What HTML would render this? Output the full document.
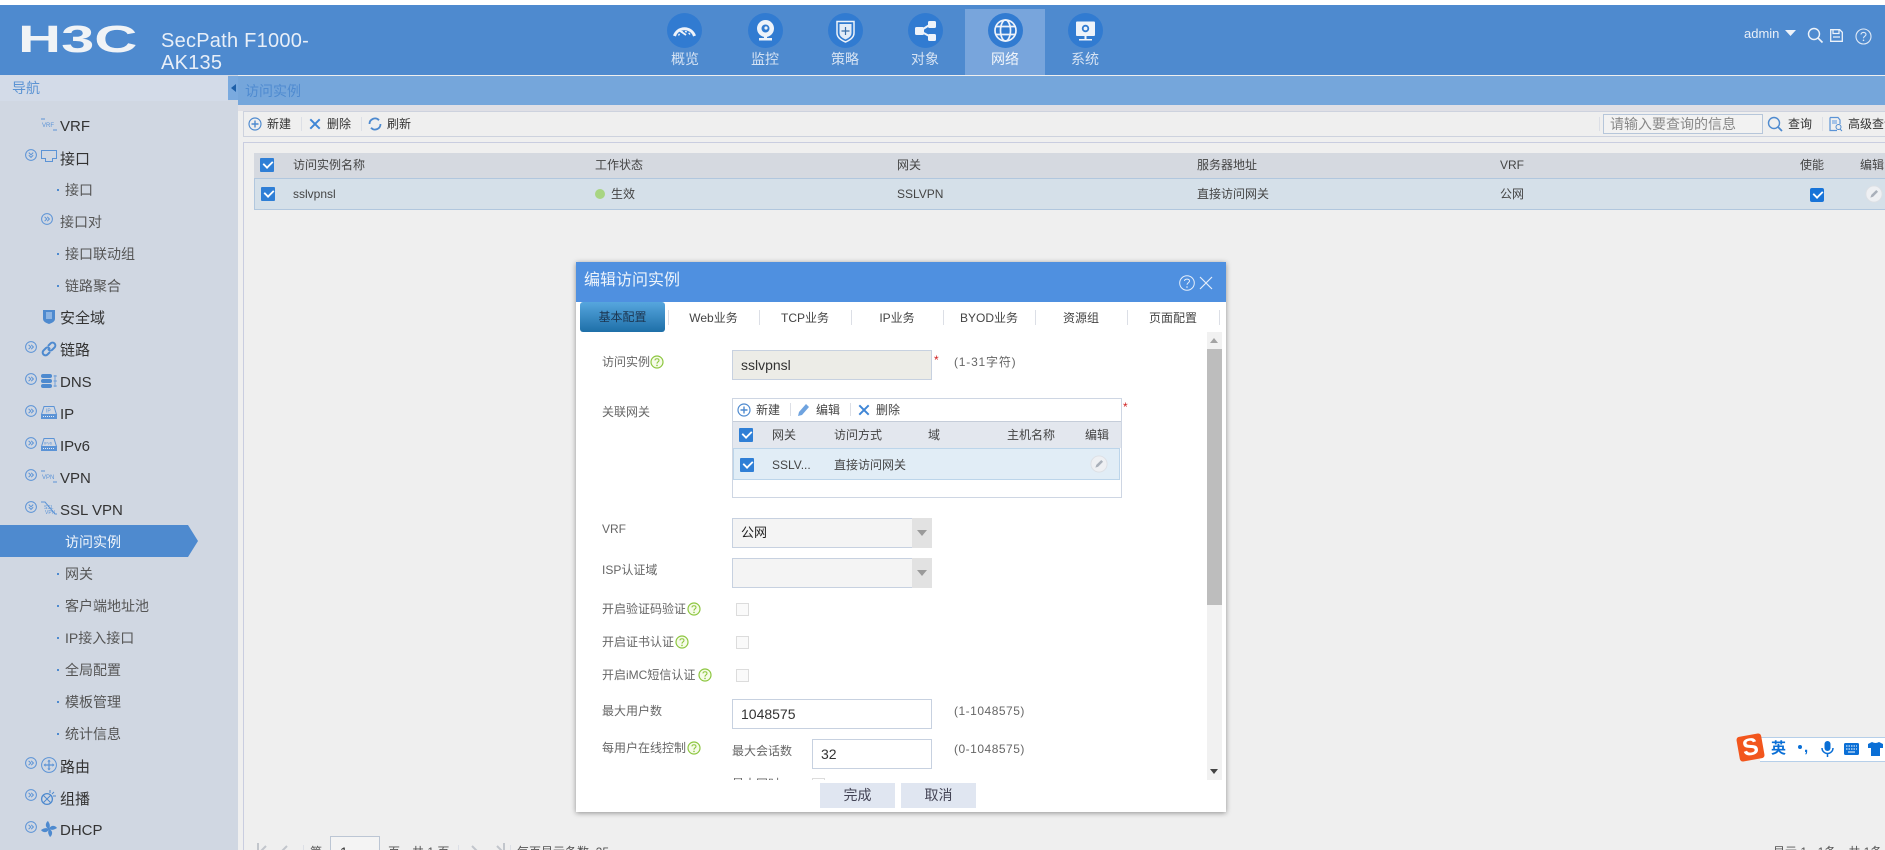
<!DOCTYPE html>
<html lang="zh"><head><meta charset="utf-8"><title>访问实例</title>
<style>
*{box-sizing:border-box}
html,body{margin:0;padding:0;width:1885px;height:850px;overflow:hidden}
body{background:#efefef;font-family:"Liberation Sans","Noto Sans CJK SC",sans-serif;color:#444;font-size:12px}
#w{position:relative;width:1885px;height:850px;overflow:hidden;background:#efefef}
.a,.t{position:absolute}
.t{line-height:20px;white-space:nowrap}
.m{font-size:15px;color:#333;margin-top:1px}
.s{font-size:14px;color:#555}
.d{position:absolute;left:57px;width:2px;height:2px;background:#4e8acf}
.c{text-align:center}
svg{position:absolute;overflow:visible}
.cb{position:absolute;width:14px;height:14px;background:#2f7fd6;border-radius:1px}
.cb:after{content:"";position:absolute;left:3px;top:2px;width:8px;height:5px;border-left:2px solid #fff;border-bottom:2px solid #fff;transform:rotate(-45deg) scale(.9)}
.e{position:absolute;width:13px;height:13px;border:1px solid #dcdcdc;background:#fafafa}
.nl{position:absolute;top:49px;width:80px;text-align:center;font-size:14px;line-height:20px;color:#d6e3f3}
.nc{position:absolute;top:13px;width:35px;height:35px;border-radius:50%;background:#317bd1}
.sp{position:absolute;width:1px;background:#dcdfe6}
.h{font-size:12px;color:#666}
.ip{position:absolute;border:1px solid #c7d1e0;background:#fff;font-size:14px;color:#333;line-height:28px;padding-left:8px}
</style></head><body><div id="w">
<svg width="0" height="0" style="position:absolute"><defs>
<symbol id="rt" viewBox="0 0 12 12"><circle cx="6" cy="6" r="5.4" fill="none" stroke="#5b93d6" stroke-width="1"/><path d="M3.6 3.8L5.8 6 3.6 8.2M6.2 3.8L8.4 6 6.2 8.2" fill="none" stroke="#5b93d6" stroke-width="1"/></symbol>
<symbol id="dn" viewBox="0 0 12 12"><circle cx="6" cy="6" r="5.4" fill="none" stroke="#5b93d6" stroke-width="1"/><path d="M3.8 3.6L6 5.8 8.2 3.6M3.8 6.2L6 8.4 8.2 6.2" fill="none" stroke="#5b93d6" stroke-width="1"/></symbol>
<symbol id="help" viewBox="0 0 14 14"><circle cx="7" cy="7" r="6" fill="#f6fbe9" stroke="#8cc63f" stroke-width="1.2"/><path d="M5 5.4C5 3.2 9 3.2 9 5.4 9 6.9 7 6.8 7 8.6" fill="none" stroke="#8cc63f" stroke-width="1.1"/><circle cx="7" cy="10.4" r=".8" fill="#8cc63f"/></symbol>
<symbol id="pen" viewBox="0 0 20 20"><circle cx="10" cy="10" r="9" fill="#eef0f3" stroke="#dcdfe4"/><path d="M6 14l1-3 5.5-5.5 2 2L9 13z" fill="#a9b0ba"/></symbol>
<symbol id="plus" viewBox="0 0 14 14"><circle cx="7" cy="7" r="6" fill="none" stroke="#4e8acf" stroke-width="1.2"/><path d="M7 3.5v7M3.5 7h7" stroke="#4e8acf" stroke-width="1.4"/></symbol>
<symbol id="x" viewBox="0 0 14 14"><path d="M1.5 1.5L12.5 12.5M12.5 1.5L1.5 12.5" stroke="#3f86d6" stroke-width="2.3"/></symbol>
</defs></svg>

<!-- header -->
<div class="a" style="left:0;top:0;width:1885px;height:5px;background:#fff"></div>
<div class="a" style="left:0;top:5px;width:1885px;height:70px;background:#4e8acf"></div>
<div class="a" style="left:18px;top:15px;width:76px;height:50px;font:bold 38px/50px 'Liberation Sans',sans-serif;color:#f0f3f6;transform-origin:0 50%;transform:scaleX(1.57)">H3C</div>
<div class="a" style="left:161px;top:30px;width:170px;font-size:20px;line-height:22px;letter-spacing:.25px;color:#e8eff8">SecPath F1000-<br>AK135</div>
<div class="a" style="left:965px;top:9px;width:80px;height:66px;background:#78a5dc"></div>
<div class="nc" style="left:667px"></div><div class="nc" style="left:748px"></div><div class="nc" style="left:828px"></div><div class="nc" style="left:908px"></div><div class="nc" style="left:988px"></div><div class="nc" style="left:1068px"></div>
<svg style="left:667px;top:13px" width="35" height="35" viewBox="0 0 35 35"><path d="M7.500 23A10.500 10.500 0 0 1 27.500 23" fill="none" stroke="#eef3fa" stroke-width="3"/><path d="M11.500 22.500A6.500 6.500 0 0 1 23.500 22.500" fill="none" stroke="#eef3fa" stroke-width="1.400" stroke-dasharray="2 2"/><path d="M19 22L11 16.500" stroke="#eef3fa" stroke-width="1.800"/></svg>
<svg style="left:748px;top:13px" width="35" height="35" viewBox="0 0 35 35"><circle cx="17.500" cy="15.500" r="8.500" fill="#eef3fa"/><circle cx="17.500" cy="15.500" r="4" fill="#317bd1"/><circle cx="18" cy="15" r="1.600" fill="#eef3fa"/><path d="M16 23h3v2h-3zM11 25h13v2.500H11z" fill="#eef3fa"/></svg>
<svg style="left:828px;top:13px" width="35" height="35" viewBox="0 0 35 35"><path d="M9 8.500h17v11.500q0 5.500-8.500 9q-8.500-3.500-8.500-9z" fill="none" stroke="#eef3fa" stroke-width="1.500"/><path d="M11.500 11h12v9q0 4-6 6.500q-6-2.500-6-6.500z" fill="#e3ecf8"/><path d="M17.500 14v8M13.500 18h8" stroke="#3a6ea8" stroke-width="1.200"/></svg>
<svg style="left:908px;top:13px" width="35" height="35" viewBox="0 0 35 35"><path d="M12 18L23 11M12 18L23 24" stroke="#eef3fa" stroke-width="2"/><rect x="7" y="14" width="9" height="8" rx="1.500" fill="#eef3fa"/><rect x="20" y="8" width="8" height="7" rx="1.500" fill="#eef3fa"/><rect x="20" y="21" width="8" height="7" rx="1.500" fill="#eef3fa"/></svg>
<svg style="left:988px;top:13px" width="35" height="35" viewBox="0 0 35 35"><g fill="none" stroke="#eef3fa" stroke-width="1.700"><circle cx="17.500" cy="17.500" r="10.500"/><ellipse cx="17.500" cy="17.500" rx="5" ry="10.500"/><path d="M8 13.500h19M8 21.500h19"/></g></svg>
<svg style="left:1068px;top:13px" width="35" height="35" viewBox="0 0 35 35"><rect x="8" y="8.500" width="19" height="14.500" rx="1" fill="#eef3fa"/><circle cx="17.500" cy="15.500" r="2.800" fill="none" stroke="#317bd1" stroke-width="1.800"/><path d="M16.500 23h2v3h-2zM11 26h13v1.500H11z" fill="#eef3fa"/></svg>
<div class="nl" style="left:645px">概览</div><div class="nl" style="left:725px">监控</div><div class="nl" style="left:805px">策略</div><div class="nl" style="left:885px">对象</div><div class="nl" style="left:965px;color:#f2f6fb">网络</div><div class="nl" style="left:1045px">系统</div>
<div class="t" style="left:1744px;top:24px;font-size:13px;color:#e8eff8">admin</div>
<svg style="left:1785px;top:30px" width="12" height="7"><path d="M0 0h11L5.500 6z" fill="#eef3fa"/></svg>
<svg style="left:1807px;top:27px" width="17" height="17"><circle cx="7" cy="7" r="5.500" fill="none" stroke="#eef3fa" stroke-width="1.400"/><path d="M11 11l4.500 4.500" stroke="#eef3fa" stroke-width="1.600"/></svg>
<svg style="left:1830px;top:29px" width="13" height="13"><path d="M.7.7h9l2.600 2.600v9H.7z" fill="none" stroke="#eef3fa" stroke-width="1.300"/><path d="M3 1v3.500h6V1M3 8h7" fill="none" stroke="#eef3fa" stroke-width="1.200"/></svg>
<svg style="left:1855px;top:28px" width="17" height="17"><circle cx="8.500" cy="8.500" r="7.500" fill="none" stroke="#dfe9f6" stroke-width="1.100"/><path d="M6 6.500C6 3.800 11 3.800 11 6.500 11 8.300 8.500 8.200 8.500 10.300" fill="none" stroke="#dfe9f6" stroke-width="1.100"/><circle cx="8.500" cy="12.300" r=".8" fill="#dfe9f6"/></svg>

<!-- breadcrumb -->
<div class="a" style="left:238px;top:76px;width:1647px;height:29px;background:#75a6db"></div>
<div class="t" style="left:245px;top:81px;font-size:14px;color:#4f8bd0">访问实例</div>
<div class="a" style="left:238px;top:105px;width:1647px;height:6px;background:#dfdfe5"></div>

<!-- sidebar -->
<div class="a" style="left:0;top:75px;width:238px;height:775px;background:#d0d7e2"></div>
<div class="a" style="left:0;top:75px;width:228px;height:26px;background:#d3dbe8"></div>
<div class="a" style="left:228px;top:76px;width:10px;height:24px;background:#7aaadf"></div>
<svg style="left:231px;top:84px" width="6" height="9"><path d="M5 0v8L0 4z" fill="#1d5fa8"/></svg>
<div class="t" style="left:12px;top:78px;font-size:14px;color:#5b93d3">导航</div>

<div class="a" style="left:0;top:525px;width:188px;height:32px;background:#4e8acf"></div>
<svg style="left:188px;top:525px" width="10" height="32"><path d="M0 0l10 16L0 32z" fill="#4e8acf"/></svg>

<div class="t m" style="left:60px;top:116px">VRF</div>
<div class="t m" style="left:60px;top:149px">接口</div>
<div class="t s" style="left:65px;top:180px">接口</div>
<div class="t s" style="left:60px;top:212px">接口对</div>
<div class="t s" style="left:65px;top:244px">接口联动组</div>
<div class="t s" style="left:65px;top:276px">链路聚合</div>
<div class="t m" style="left:60px;top:308px">安全域</div>
<div class="t m" style="left:60px;top:340px">链路</div>
<div class="t m" style="left:60px;top:372px">DNS</div>
<div class="t m" style="left:60px;top:404px">IP</div>
<div class="t m" style="left:60px;top:436px">IPv6</div>
<div class="t m" style="left:60px;top:468px">VPN</div>
<div class="t m" style="left:60px;top:500px">SSL VPN</div>
<div class="t s" style="left:65px;top:532px;color:#f2f6fb">访问实例</div>
<div class="t s" style="left:65px;top:564px">网关</div>
<div class="t s" style="left:65px;top:596px">客户端地址池</div>
<div class="t s" style="left:65px;top:628px">IP接入接口</div>
<div class="t s" style="left:65px;top:660px">全局配置</div>
<div class="t s" style="left:65px;top:692px">模板管理</div>
<div class="t s" style="left:65px;top:724px">统计信息</div>
<div class="t m" style="left:60px;top:757px">路由</div>
<div class="t m" style="left:60px;top:789px">组播</div>
<div class="t m" style="left:60px;top:820px">DHCP</div>
<div class="d" style="top:189px"></div><div class="d" style="top:253px"></div><div class="d" style="top:285px"></div><div class="d" style="top:541px"></div><div class="d" style="top:573px"></div><div class="d" style="top:605px"></div><div class="d" style="top:637px"></div><div class="d" style="top:669px"></div><div class="d" style="top:701px"></div><div class="d" style="top:733px"></div>

<svg style="left:25px;top:149px" width="12" height="12"><use href="#dn"/></svg>
<svg style="left:41px;top:213px" width="12" height="12"><use href="#rt"/></svg>
<svg style="left:25px;top:341px" width="12" height="12"><use href="#rt"/></svg>
<svg style="left:25px;top:373px" width="12" height="12"><use href="#rt"/></svg>
<svg style="left:25px;top:405px" width="12" height="12"><use href="#rt"/></svg>
<svg style="left:25px;top:437px" width="12" height="12"><use href="#rt"/></svg>
<svg style="left:25px;top:469px" width="12" height="12"><use href="#rt"/></svg>
<svg style="left:25px;top:501px" width="12" height="12"><use href="#dn"/></svg>
<svg style="left:25px;top:757px" width="12" height="12"><use href="#rt"/></svg>
<svg style="left:25px;top:789px" width="12" height="12"><use href="#rt"/></svg>
<svg style="left:25px;top:821px" width="12" height="12"><use href="#rt"/></svg>

<svg style="left:41px;top:118px" width="16" height="14"><path d="M0 1h4M12 12h4" stroke="#5b93d6" fill="none"/><text x="1" y="9" font-size="6" fill="#5b93d6" font-family="Liberation Sans">VRF</text></svg>
<svg style="left:41px;top:150px" width="16" height="13"><path d="M.5.500h15v8h-4v3h-7v-3h-4z" fill="none" stroke="#5b93d6"/></svg>
<svg style="left:43px;top:309px" width="12" height="16"><path d="M0 1h12v9q0 3-6 5q-6-2-6-5z" fill="#4e8acf"/><path d="M3 3h6v7H3z" fill="#8db4e2"/></svg>
<svg style="left:41px;top:341px" width="16" height="16"><g fill="none" stroke="#4e8acf" stroke-width="2" stroke-linecap="round"><path d="M7.500 4.500L9.500 2.500A2.500 2.500 0 0 1 13.500 6.500L11 9A2.500 2.500 0 0 1 7.500 8.500"/><path d="M8.500 11.500L6.500 13.500A2.500 2.500 0 0 1 2.500 9.500L5 7A2.500 2.500 0 0 1 8.500 7.500"/></g></svg>
<svg style="left:41px;top:374px" width="16" height="14"><rect x="0" y="0" width="11" height="4" rx="2" fill="#4e8acf"/><rect x="0" y="5" width="11" height="4" rx="2" fill="#4e8acf"/><rect x="0" y="10" width="11" height="4" rx="2" fill="#4e8acf"/><path d="M12.500 2h3.500M12.500 7h3.500M12.500 12h3.500M14 1v12" stroke="#5b93d6" stroke-width=".8"/></svg>
<svg style="left:41px;top:406px" width="16" height="13"><path d="M3 .500h10l2.500 8h-15z" fill="none" stroke="#5b93d6"/><rect x="0" y="8" width="16" height="5" fill="#5b93d6"/><path d="M2 10.500h12" stroke="#e4eaf2" stroke-dasharray="1 1"/><text x="5" y="6.500" font-size="5" fill="#5b93d6" font-family="Liberation Sans">IP</text></svg>
<svg style="left:41px;top:438px" width="16" height="13"><path d="M3 .500h10l2.500 8h-15z" fill="none" stroke="#5b93d6"/><rect x="0" y="8" width="16" height="5" fill="#5b93d6"/><path d="M2 10.500h12" stroke="#e4eaf2" stroke-dasharray="1 1"/><text x="3" y="6.500" font-size="4" fill="#5b93d6" font-family="Liberation Sans">IPv6</text></svg>
<svg style="left:41px;top:470px" width="16" height="14"><path d="M0 1h4M12 12h4" stroke="#5b93d6"/><text x="1" y="9" font-size="6" fill="#5b93d6" font-family="Liberation Sans">VPN</text></svg>
<svg style="left:41px;top:501px" width="16" height="15"><path d="M0 1h4l10 12h2" stroke="#5b93d6" fill="none"/><text x="3" y="8" font-size="5" fill="#5b93d6" font-family="Liberation Sans">SSL</text><text x="4" y="13" font-size="5" fill="#5b93d6" font-family="Liberation Sans">VPN</text></svg>
<svg style="left:41px;top:757px" width="16" height="16"><circle cx="8" cy="8" r="7.400" fill="none" stroke="#5b93d6"/><path d="M8 4.500v7M4.500 8h7" stroke="#5b93d6" stroke-width="1.200"/><path d="M8 2.500l-1.700 2h3.400zM8 13.500l-1.700-2h3.400zM2.500 8l2-1.700v3.400zM13.500 8l-2-1.700v3.400z" fill="#5b93d6"/></svg>
<svg style="left:41px;top:789px" width="16" height="16"><circle cx="6" cy="10" r="5.400" fill="none" stroke="#4e8acf" stroke-width="1.300"/><path d="M2.500 6.500l7 7M9.500 6.500l-7 7" stroke="#4e8acf"/><path d="M9 1v3M13 3l-2 2M15 7h-3" stroke="#4e8acf"/></svg>
<svg style="left:41px;top:821px" width="16" height="16"><path d="M8 8C3 6 5 1 7 0c1 2 3 4 1 8zM8 8c2-5 7-3 8-1-2 1-4 3-8 1zM8 8c5 2 3 7 1 8-1-2-3-4-1-8zM8 8c-2 5-7 3-8 1 2-1 4-3 8-1z" fill="#4e8acf"/></svg>

<!-- main content -->
<div class="a" style="left:243px;top:111px;width:1642px;height:26px;background:#efefef;border:1px solid #cdd2de;border-right:0"></div>
<div class="a" style="left:243px;top:142px;width:1642px;height:708px;background:#efefef;border-top:1px solid #c9cde0;border-left:1px solid #c9cde0"></div>
<svg style="left:248px;top:117px" width="14" height="14"><use href="#plus"/></svg>
<div class="t" style="left:267px;top:114px;color:#333">新建</div>
<div class="sp" style="left:301px;top:117px;height:14px"></div>
<svg style="left:309px;top:118px" width="12" height="12" viewBox="0 0 14 14"><use href="#x"/></svg>
<div class="t" style="left:327px;top:114px;color:#333">删除</div>
<div class="sp" style="left:361px;top:117px;height:14px"></div>
<svg style="left:368px;top:117px" width="14" height="14"><path d="M1.500 7A5.500 5.500 0 0 1 11 3.200M12.500 7A5.500 5.500 0 0 1 3 10.800" fill="none" stroke="#4e8acf" stroke-width="1.800"/></svg>
<div class="t" style="left:387px;top:114px;color:#333">刷新</div>
<div class="sp" style="left:1599px;top:117px;height:14px"></div>
<div class="a" style="left:1603px;top:114px;width:160px;height:20px;border:1px solid #b6c6da;background:#f2f2f2"></div>
<div class="t" style="left:1610px;top:114px;font-size:14px;color:#888">请输入要查询的信息</div>
<svg style="left:1767px;top:116px" width="16" height="16"><circle cx="7" cy="7" r="5.500" fill="none" stroke="#4e8acf" stroke-width="1.400"/><path d="M11 11l4 4" stroke="#4e8acf" stroke-width="1.800"/></svg>
<div class="t" style="left:1788px;top:114px;color:#333">查询</div>
<div class="sp" style="left:1822px;top:117px;height:14px"></div>
<svg style="left:1829px;top:117px" width="14" height="14"><path d="M1 .500h8l2 2.500v4M1 .500v13h7" fill="none" stroke="#5b93d6" stroke-width="1.200"/><path d="M3 3h5v4H3z" fill="#a6c4e8"/><circle cx="9.500" cy="10" r="2.500" fill="none" stroke="#4e8acf"/><path d="M11 12l2 2" stroke="#4e8acf"/></svg>
<div class="t" style="left:1848px;top:114px;color:#333">高级查询</div>

<div class="a" style="left:254px;top:153px;width:1631px;height:25px;background:#d5d9e0"></div>
<div class="a" style="left:254px;top:178px;width:1631px;height:32px;background:#d5e0e9;border:1px solid #b1c7de;border-right:0"></div>
<div class="cb" style="left:260px;top:158px"></div><div class="cb" style="left:261px;top:187px"></div>
<div class="t" style="left:293px;top:155px">访问实例名称</div>
<div class="t" style="left:595px;top:155px">工作状态</div>
<div class="t" style="left:897px;top:155px">网关</div>
<div class="t" style="left:1197px;top:155px">服务器地址</div>
<div class="t" style="left:1500px;top:155px">VRF</div>
<div class="t" style="left:1800px;top:155px">使能</div>
<div class="t" style="left:1860px;top:155px">编辑</div>
<div class="t" style="left:293px;top:184px">sslvpnsl</div>
<div class="a" style="left:595px;top:189px;width:10px;height:10px;border-radius:50%;background:#a8d582"></div>
<div class="t" style="left:611px;top:184px">生效</div>
<div class="t" style="left:897px;top:184px">SSLVPN</div>
<div class="t" style="left:1197px;top:184px">直接访问网关</div>
<div class="t" style="left:1500px;top:184px">公网</div>
<div class="cb" style="left:1810px;top:188px;background:#1874d8;border-radius:2px"></div>
<svg style="left:1865px;top:185px" width="18" height="18" viewBox="0 0 20 20"><use href="#pen"/></svg>

<!-- pager -->
<svg style="left:257px;top:843px" width="40" height="14"><g fill="none" stroke="#c2c6cc" stroke-width="2"><path d="M1 0v14M15 8H5M9 3L4 8l5 5M37 8H25M30 3l-5 5 5 5"/></g></svg>
<div class="sp" style="left:303px;top:845px;height:5px"></div>
<div class="t" style="left:310px;top:842px;color:#555">第</div>
<div class="a" style="left:330px;top:836px;width:50px;height:20px;border:1px solid #bcc6d4;background:#f4f4f4;padding-left:9px;font-size:14px;line-height:30px;color:#333">1</div>
<div class="t" style="left:388px;top:842px;color:#555">页，共 1 页</div>
<div class="sp" style="left:458px;top:845px;height:5px"></div>
<svg style="left:465px;top:843px" width="40" height="14"><g fill="none" stroke="#c2c6cc" stroke-width="2"><path d="M0 8h11M7 3l5 5-5 5M25 8h11M32 3l5 5-5 5"/><path d="M39 0v14"/></g></svg>
<div class="sp" style="left:510px;top:845px;height:5px"></div>
<div class="t" style="left:517px;top:842px;color:#555">每页显示条数 &nbsp;25</div>
<div class="t" style="left:1773px;top:842px;color:#555">显示 1 - 1条，共 1条</div>

<!-- sogou -->
<div class="a" style="left:1760px;top:737px;width:125px;height:25px;background:#fff;border-top:1px solid #b6cfe9;border-bottom:1px solid #b6cfe9"></div>
<div class="a" style="left:1738px;top:735px;width:25px;height:25px;border-radius:3px;background:#f2561d;transform:rotate(-10deg);color:#fff;font:bold 24px/25px 'Liberation Sans',sans-serif;text-align:center">S</div>
<div class="t" style="left:1771px;top:739px;font-size:15px;font-weight:bold;color:#0a6fd6">英</div>
<div class="a" style="left:1798px;top:745px;width:4px;height:4px;border-radius:50%;background:#0a6fd6"></div>
<div class="t" style="left:1804px;top:743px;font-size:15px;font-weight:bold;color:#0a6fd6;line-height:10px">,</div>
<svg style="left:1821px;top:741px" width="13" height="17"><rect x="3.500" y="0" width="6" height="10" rx="3" fill="#0a6fd6"/><path d="M1 7a5.500 5.500 0 0 0 11 0M6.500 13v3" fill="none" stroke="#0a6fd6" stroke-width="1.500"/></svg>
<svg style="left:1844px;top:743px" width="15" height="12"><rect width="15" height="12" rx="1.500" fill="#0a6fd6"/><path d="M2 3h11M2 6h11" stroke="#fff" stroke-dasharray="1.500 1"/><path d="M4 9h7" stroke="#fff"/></svg>
<svg style="left:1868px;top:742px" width="15" height="14"><path d="M4 0L0 2v4h3v8h9V6h3V2L11 0Q7.500 2 4 0z" fill="#0a6fd6"/></svg>

<!-- dialog -->
<div class="a" style="left:576px;top:262px;width:650px;height:550px;background:#fff;box-shadow:0 1px 5px rgba(0,0,0,.4)"></div>
<div class="a" style="left:576px;top:262px;width:650px;height:40px;background:#4f90e0"></div>
<div class="t" style="left:584px;top:271px;font-size:16px;color:#eef4fb">编辑访问实例</div>
<svg style="left:1179px;top:275px" width="16" height="16"><circle cx="8" cy="8" r="7.300" fill="none" stroke="#e6eefa" stroke-width="1"/><path d="M5.500 6C5.500 3.500 10.500 3.500 10.500 6 10.500 7.800 8 7.700 8 9.800" fill="none" stroke="#e6eefa"/><circle cx="8" cy="12" r=".8" fill="#e6eefa"/></svg>
<svg style="left:1199px;top:276px" width="14" height="14"><path d="M1 1l12 12M13 1L1 13" stroke="#e6eefa" stroke-width="1.200"/></svg>

<div class="a c" style="left:580px;top:302px;width:85px;height:30px;border-radius:3px;background:linear-gradient(#56a6de,#1e6fa8);line-height:30px;color:#1c3550;font-size:12px">基本配置</div>
<div class="t c" style="left:668px;top:308px;width:91px;color:#444">Web业务</div>
<div class="t c" style="left:759px;top:308px;width:92px;color:#444">TCP业务</div>
<div class="t c" style="left:851px;top:308px;width:92px;color:#444">IP业务</div>
<div class="t c" style="left:943px;top:308px;width:92px;color:#444">BYOD业务</div>
<div class="t c" style="left:1035px;top:308px;width:92px;color:#444">资源组</div>
<div class="t c" style="left:1127px;top:308px;width:92px;color:#444">页面配置</div>
<div class="sp" style="left:668px;top:310px;height:15px"></div><div class="sp" style="left:759px;top:310px;height:15px"></div><div class="sp" style="left:851px;top:310px;height:15px"></div><div class="sp" style="left:943px;top:310px;height:15px"></div><div class="sp" style="left:1035px;top:310px;height:15px"></div><div class="sp" style="left:1127px;top:310px;height:15px"></div><div class="sp" style="left:1219px;top:310px;height:15px"></div>

<div class="a" style="left:1207px;top:332px;width:15px;height:448px;background:#f1f1f1"></div>
<div class="a" style="left:1207px;top:349px;width:15px;height:256px;background:#bdbdbd"></div>
<svg style="left:1210px;top:338px" width="8" height="5"><path d="M0 5h8L4 0z" fill="#a3a3a3"/></svg>
<svg style="left:1210px;top:769px" width="8" height="5"><path d="M0 0h8L4 5z" fill="#444"/></svg>

<div class="t h" style="left:602px;top:352px">访问实例</div>
<svg style="left:650px;top:355px" width="14" height="14"><use href="#help"/></svg>
<div class="ip" style="left:732px;top:350px;width:200px;height:30px;background:#ecece7">sslvpnsl</div>
<div class="t" style="left:934px;top:350px;color:#d02020;font-size:12px">*</div>
<div class="t h" style="left:954px;top:352px;letter-spacing:.8px">(1-31字符)</div>

<div class="t h" style="left:602px;top:402px">关联网关</div>
<div class="a" style="left:732px;top:398px;width:390px;height:100px;border:1px solid #ced6e3;background:#fff"></div>
<svg style="left:737px;top:403px" width="14" height="14"><use href="#plus"/></svg>
<div class="t" style="left:756px;top:400px;color:#444">新建</div>
<div class="sp" style="left:790px;top:403px;height:13px"></div>
<svg style="left:797px;top:403px" width="14" height="14"><path d="M1 13l1-4 7-8 3 3-7 8z" fill="#6fa3df"/></svg>
<div class="t" style="left:816px;top:400px;color:#444">编辑</div>
<div class="sp" style="left:850px;top:403px;height:13px"></div>
<svg style="left:858px;top:404px" width="12" height="12" viewBox="0 0 14 14"><use href="#x"/></svg>
<div class="t" style="left:876px;top:400px;color:#444">删除</div>
<div class="a" style="left:733px;top:421px;width:388px;height:27px;background:#e3e7ee;border-top:1px solid #c5cdd9"></div>
<div class="a" style="left:733px;top:448px;width:387px;height:32px;background:#e1edf6;border:1px solid #bcd5ea"></div>
<div class="cb" style="left:739px;top:428px"></div><div class="cb" style="left:740px;top:458px"></div>
<div class="t" style="left:772px;top:425px">网关</div>
<div class="t" style="left:834px;top:425px">访问方式</div>
<div class="t" style="left:928px;top:425px">域</div>
<div class="t" style="left:1007px;top:425px">主机名称</div>
<div class="t" style="left:1085px;top:425px">编辑</div>
<div class="t" style="left:772px;top:455px">SSLV...</div>
<div class="t" style="left:834px;top:455px">直接访问网关</div>
<svg style="left:1090px;top:455px" width="18" height="18" viewBox="0 0 20 20"><use href="#pen"/></svg>
<div class="t" style="left:1123px;top:397px;color:#d02020;font-size:12px">*</div>

<div class="t h" style="left:602px;top:519px">VRF</div>
<div class="ip" style="left:732px;top:518px;width:181px;height:30px;background:#f4f4f4;color:#222;font-size:13px">公网</div>
<div class="a" style="left:912px;top:518px;width:20px;height:30px;background:#e2e2e2"></div>
<svg style="left:917px;top:530px" width="10" height="6"><path d="M0 0h10L5 6z" fill="#9a9a9a"/></svg>
<div class="t h" style="left:602px;top:560px">ISP认证域</div>
<div class="ip" style="left:732px;top:558px;width:181px;height:30px;background:#f4f4f4"></div>
<div class="a" style="left:912px;top:558px;width:20px;height:30px;background:#e2e2e2"></div>
<svg style="left:917px;top:570px" width="10" height="6"><path d="M0 0h10L5 6z" fill="#9a9a9a"/></svg>

<div class="t h" style="left:602px;top:599px">开启验证码验证</div>
<svg style="left:687px;top:602px" width="14" height="14"><use href="#help"/></svg>
<div class="e" style="left:736px;top:603px"></div>
<div class="t h" style="left:602px;top:632px">开启证书认证</div>
<svg style="left:675px;top:635px" width="14" height="14"><use href="#help"/></svg>
<div class="e" style="left:736px;top:636px"></div>
<div class="t h" style="left:602px;top:665px">开启iMC短信认证</div>
<svg style="left:698px;top:668px" width="14" height="14"><use href="#help"/></svg>
<div class="e" style="left:736px;top:669px"></div>
<div class="t h" style="left:602px;top:701px">最大用户数</div>
<div class="ip" style="left:732px;top:699px;width:200px;height:30px">1048575</div>
<div class="t h" style="left:954px;top:701px;letter-spacing:.5px">(1-1048575)</div>
<div class="t h" style="left:602px;top:738px">每用户在线控制</div>
<svg style="left:687px;top:741px" width="14" height="14"><use href="#help"/></svg>
<div class="t h" style="left:732px;top:741px">最大会话数</div>
<div class="ip" style="left:812px;top:739px;width:120px;height:30px">32</div>
<div class="t h" style="left:954px;top:739px;letter-spacing:.5px">(0-1048575)</div>
<div class="a" style="left:732px;top:776px;width:60px;height:4px;overflow:hidden"><div class="t h" style="left:0;top:-2px">最大同时</div></div>
<div class="a" style="left:812px;top:778px;width:13px;height:2px;border:1px solid #dcdcdc;border-bottom:0"></div>

<div class="a c" style="left:820px;top:783px;width:75px;height:25px;background:#e0e6f1;font-size:14px;line-height:25px;color:#445">完成</div>
<div class="a c" style="left:901px;top:783px;width:75px;height:25px;background:#e0e6f1;font-size:14px;line-height:25px;color:#445">取消</div>
</div></body></html>
